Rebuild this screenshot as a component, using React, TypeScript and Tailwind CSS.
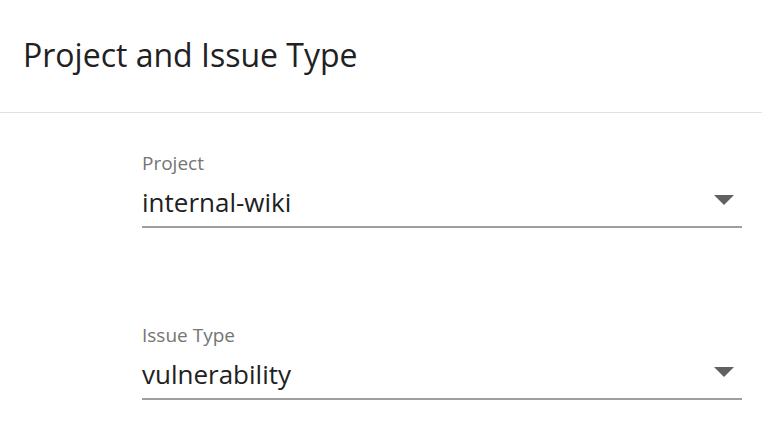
export default function App() {
  const fields = [
    { label: "Project", value: "internal-wiki" },
    { label: "Issue Type", value: "vulnerability" },
  ];

  return (
    <div className="w-[762px] h-[436px] bg-white overflow-hidden font-['Open_Sans','Noto_Sans',sans-serif]">
      <div className="h-[113px] flex items-center pl-[23px] border-b border-[#e0e0e0]">
        <h1 className="text-[32px] text-[#212121] leading-none pb-[2px]">Project and Issue Type</h1>
      </div>
      <div className="pl-[142px] pr-[20px] pt-[39px] flex flex-col gap-[96px]">
        {fields.map((f) => (
          <div key={f.label} className="flex flex-col">
            <label className="text-[19px] leading-[22px] text-[#757575]">{f.label}</label>
            <div className="flex items-center justify-between h-[54px] border-b-2 border-[#9e9e9e]">
              <span className="text-[26px] leading-none text-[#212121] pt-[4px]">{f.value}</span>
              <svg width="20" height="10" viewBox="0 0 20 10" className="mr-[8px]">
                <polygon points="0,0 20,0 10,10" fill="#616161" />
              </svg>
            </div>
          </div>
        ))}
      </div>
    </div>
  );
}
